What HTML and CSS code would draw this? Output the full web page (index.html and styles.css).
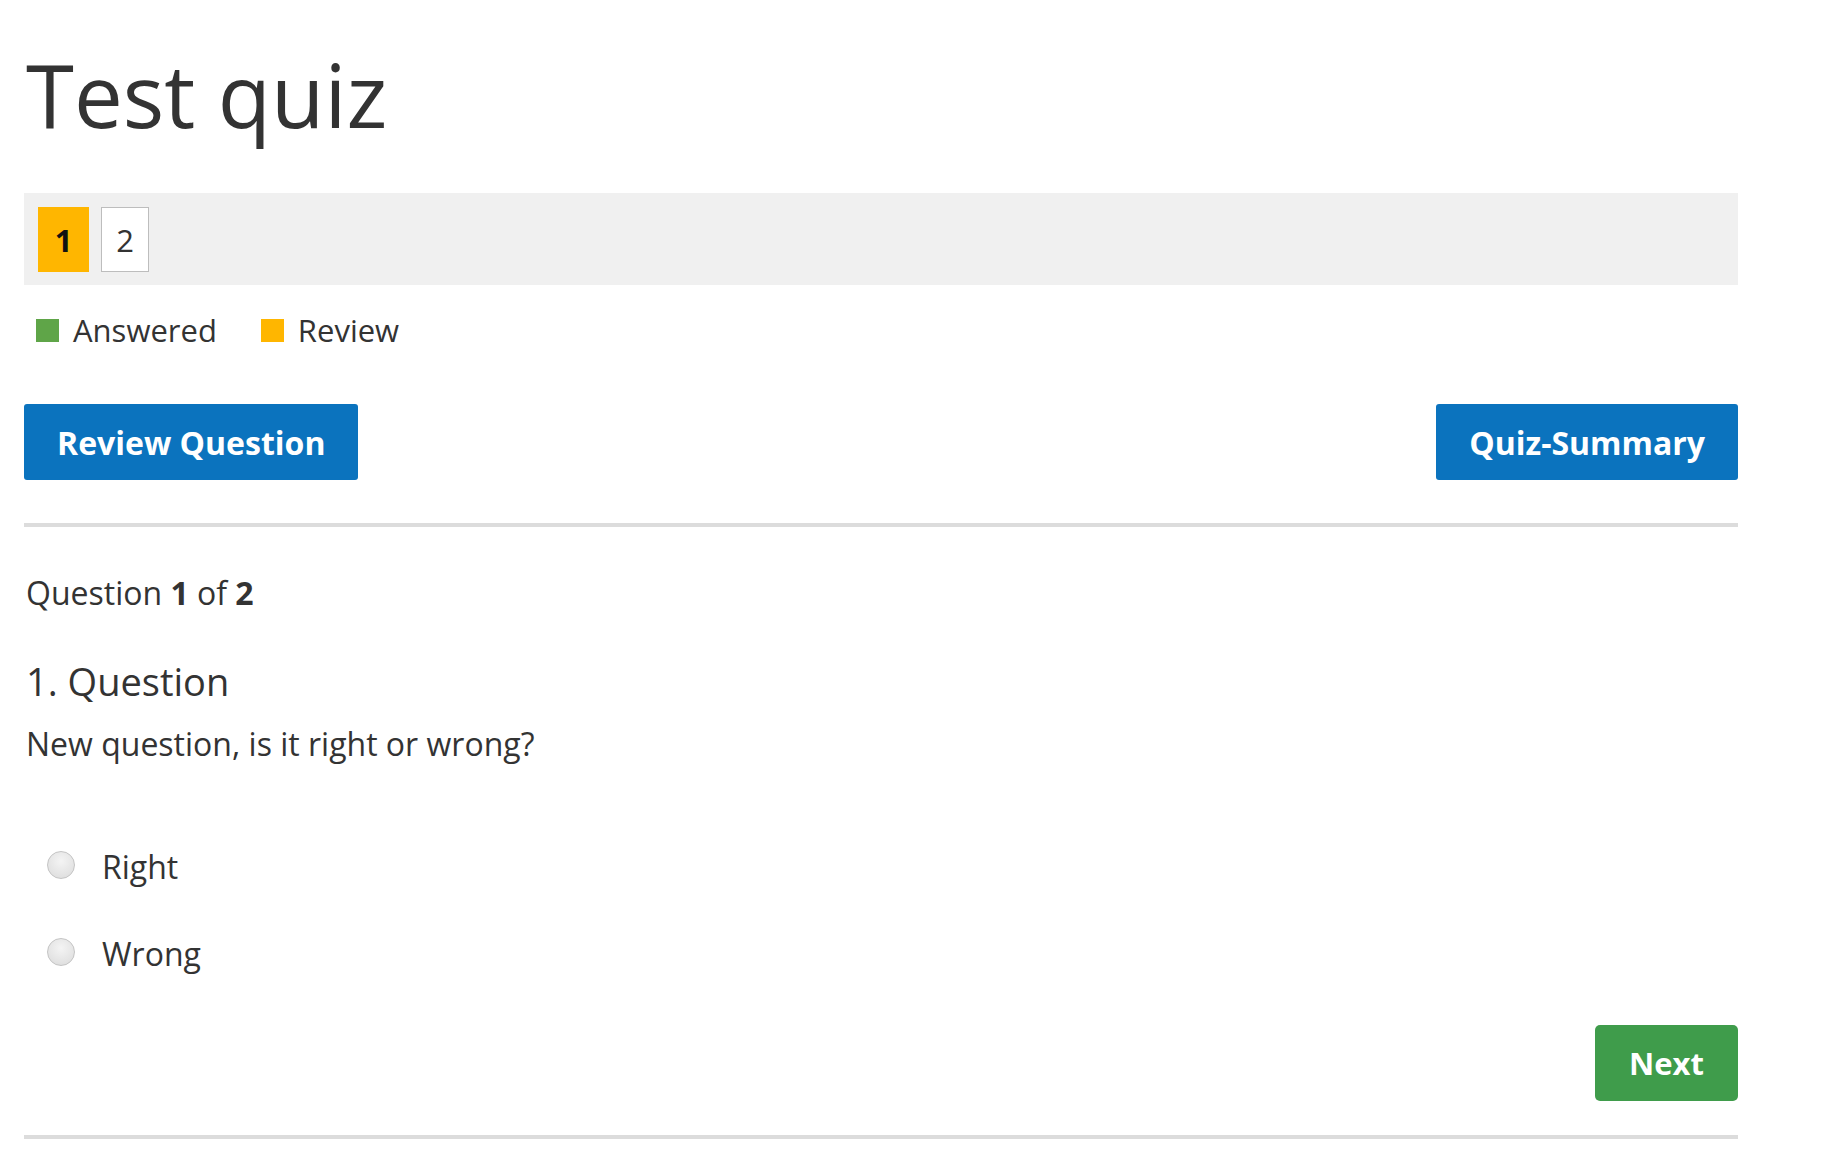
FILE: index.html
```html
<!DOCTYPE html>
<html lang="en">
<head>
<meta charset="utf-8">
<title>Test quiz</title>
<link rel="stylesheet" href="styles.css">
</head>
<body>
<main class="quiz">
  <h1 class="quiz-title">Test quiz</h1>

  <div class="question-list">
    <span class="qnum qnum-review">1</span>
    <span class="qnum">2</span>
  </div>

  <div class="legend">
    <span class="legend-item"><span class="swatch swatch-answered"></span>Answered</span>
    <span class="legend-item"><span class="swatch swatch-review"></span>Review</span>
  </div>

  <div class="action-row">
    <button class="btn btn-blue" type="button">Review Question</button>
    <button class="btn btn-blue" type="button">Quiz-Summary</button>
  </div>

  <hr class="divider">

  <div class="counter">Question <b>1</b> of <b>2</b></div>

  <h2 class="question-title">1. Question</h2>
  <p class="question-text">New question, is it right or wrong?</p>

  <ul class="answers">
    <li class="answer"><span class="radio"></span><span class="answer-label">Right</span></li>
    <li class="answer"><span class="radio"></span><span class="answer-label">Wrong</span></li>
  </ul>

  <div class="next-row">
    <button class="btn btn-green" type="button">Next</button>
  </div>

  <hr class="divider divider-bottom">
</main>
</body>
</html>
```

FILE: styles.css
```css
html, body {
  margin: 0;
  padding: 0;
  background: #ffffff;
}

body {
  font-family: "Open Sans", "Noto Sans", "DejaVu Sans", sans-serif;
  color: #333333;
}

.quiz {
  width: 1714px;
  margin-left: 24px;
  display: flex;
  flex-direction: column;
}

.quiz-title {
  margin: 49px 0 0 2px;
  font-size: 87px;
  line-height: 90px;
  font-weight: 400;
  color: #333333;
}

.question-list {
  margin-top: 54px;
  height: 92px;
  box-sizing: border-box;
  padding: 14px 14px 13px;
  background: #f0f0f0;
  display: flex;
  gap: 12px;
  align-items: flex-start;
}

.qnum {
  display: flex;
  align-items: center;
  justify-content: center;
  height: 65px;
  box-sizing: border-box;
  font-size: 31px;
  color: #333333;
}

.qnum:not(.qnum-review) {
  width: 48px;
  background: #ffffff;
  border: 1px solid #bdbdbd;
}

.qnum-review {
  width: 51px;
  background: #ffb600;
  color: #111111;
  font-weight: 700;
}

.legend {
  margin-top: 25px;
  display: flex;
  gap: 44px;
  padding-left: 12px;
  font-size: 31px;
  line-height: 40px;
}

.legend-item {
  display: flex;
  align-items: center;
  gap: 14px;
}

.swatch {
  width: 23px;
  height: 23px;
  display: block;
}

.swatch-answered { background: #5fa548; }
.swatch-review { background: #ffb600; }

.action-row {
  margin-top: 54px;
  display: flex;
  justify-content: space-between;
}

.btn {
  height: 76px;
  padding: 0 34px;
  border: none;
  border-radius: 3px;
  font-family: "Open Sans", "Noto Sans", "DejaVu Sans", sans-serif;
  font-size: 32px;
  font-weight: 700;
  color: #ffffff;
  cursor: pointer;
}

.btn-blue { background: #0b73be; padding: 0 33px; }
.btn-green { background: #3f9c4b; border-radius: 5px; font-size: 31px; }

.divider {
  margin: 43px 0 0;
  height: 4px;
  border: none;
  background: #dcdcdc;
}

.counter {
  margin-top: 46px;
  font-size: 32px;
  line-height: 40px;
  padding-left: 2px;
}

.counter b { font-weight: 700; }

.question-title {
  margin: 45px 0 0 2px;
  font-size: 38px;
  line-height: 46px;
  font-weight: 400;
}

.question-text {
  margin: 20px 0 0 2px;
  font-size: 32px;
  line-height: 40px;
}

.answers {
  list-style: none;
  margin: 83px 0 0;
  padding: 0 0 0 23px;
  display: flex;
  flex-direction: column;
  gap: 47px;
}

.answer {
  display: flex;
  align-items: center;
  gap: 27px;
  font-size: 32px;
  line-height: 40px;
}

.radio {
  width: 28px;
  height: 28px;
  box-sizing: border-box;
  border-radius: 50%;
  border: 1px solid #c4c4c4;
  background: radial-gradient(circle at 50% 35%, #f4f4f4 0%, #e2e2e2 70%, #d8d8d8 100%);
  margin-top: -4px;
}

.next-row {
  margin-top: 51px;
  display: flex;
  justify-content: flex-end;
}

.divider-bottom {
  margin-top: 34px;
}
```
